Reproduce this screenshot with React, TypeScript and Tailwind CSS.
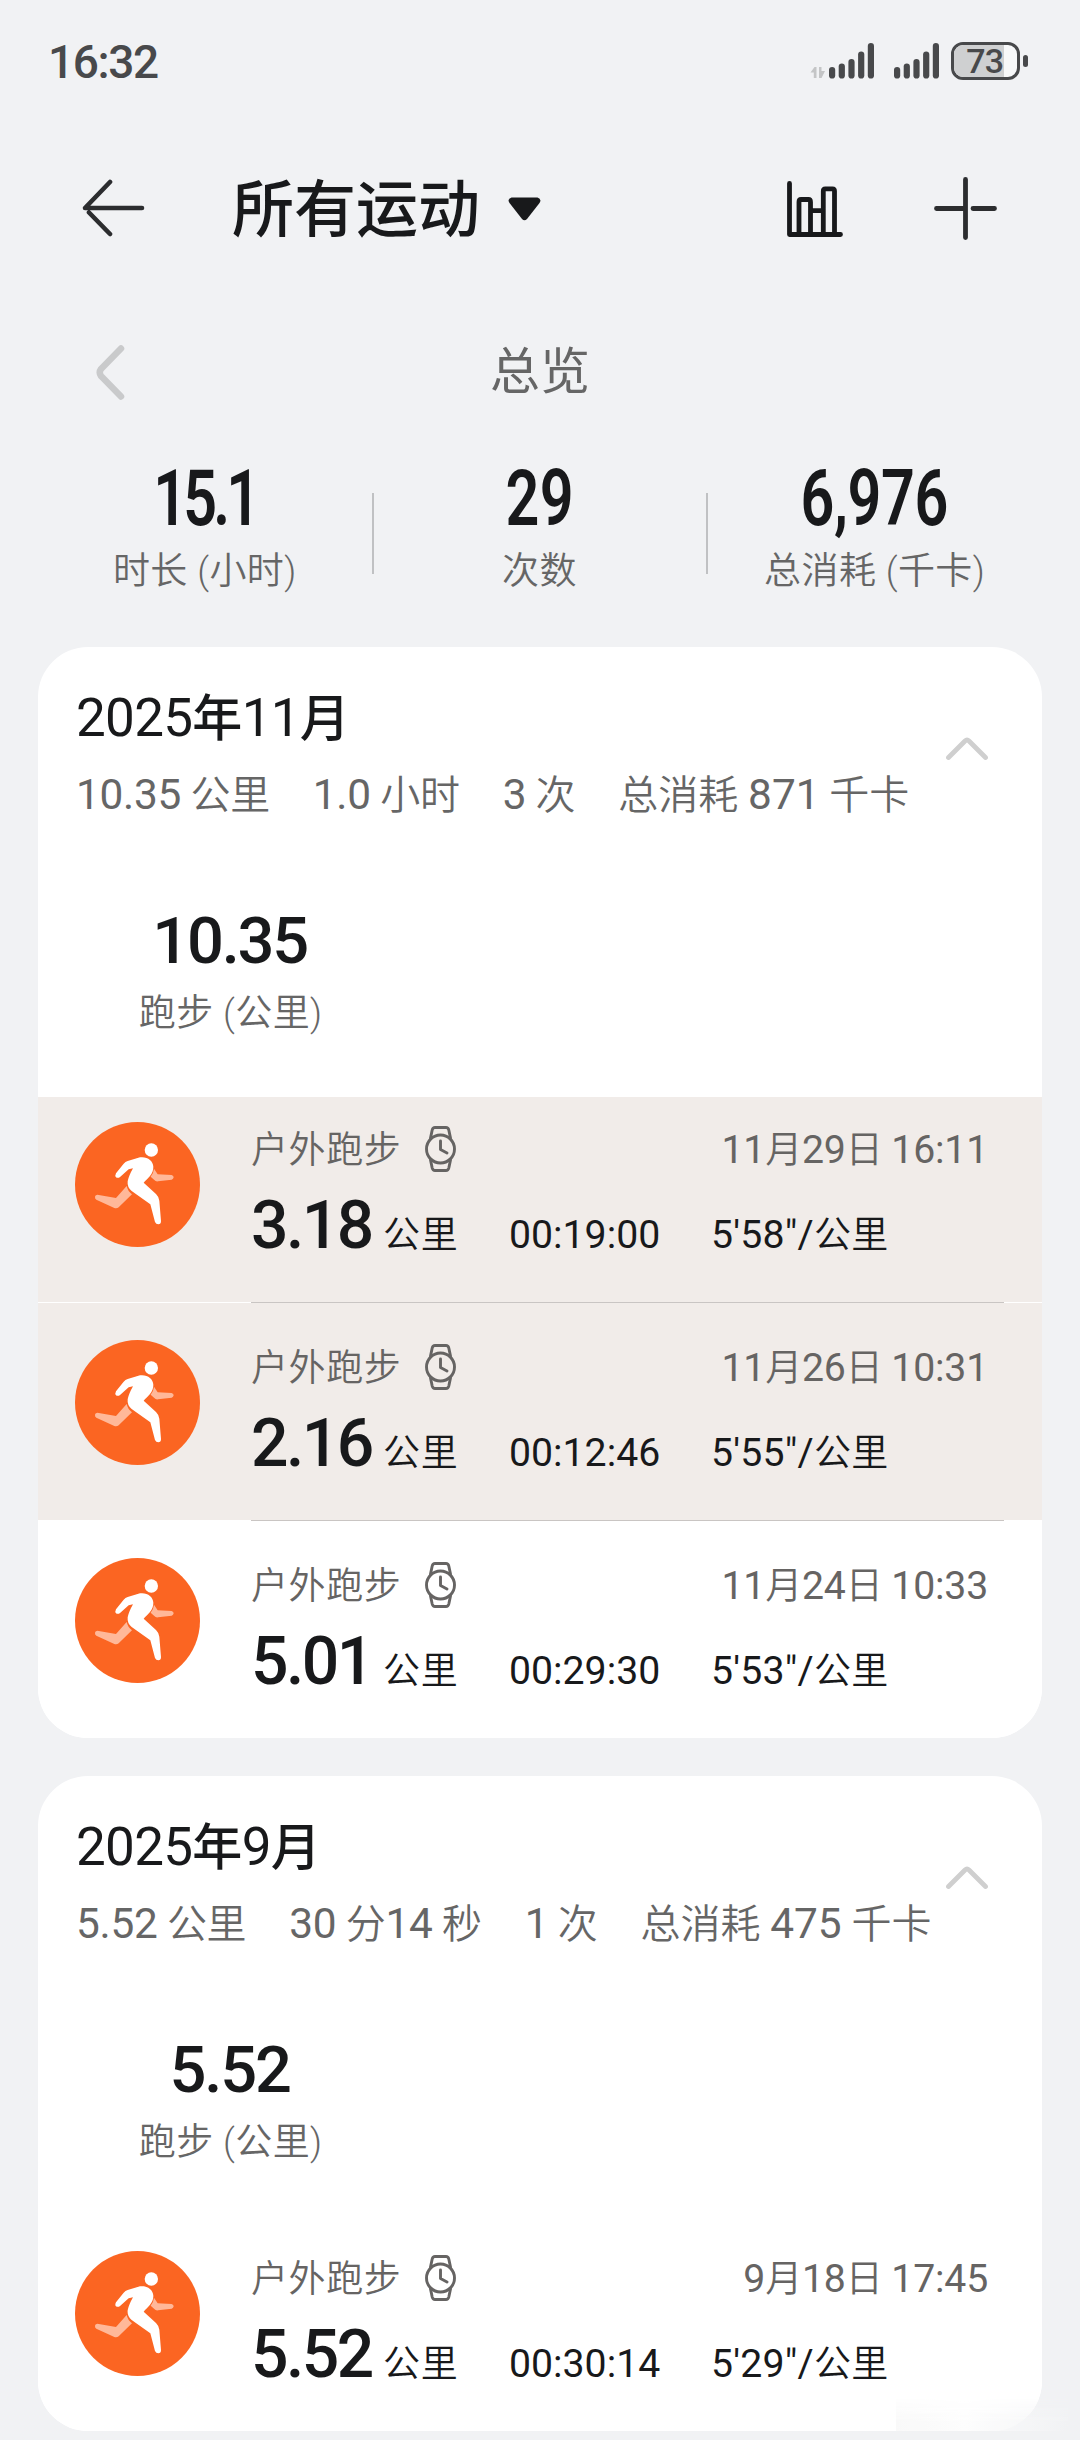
import { Fragment } from "react";

type Workout = {
  distance: string;
  duration: string;
  pace: string;
  date: string;
  highlighted?: boolean;
};

type Month = {
  title: string;
  summary: string[];
  total: string;
  workouts: Workout[];
};

const stats = [
  { value: "15.1", label: "时长 (小时)", tracking: "tracking-[-5px]" },
  { value: "29", label: "次数", tracking: "tracking-[0.5px]" },
  { value: "6,976", label: "总消耗 (千卡)", tracking: "tracking-[-0.5px]" },
];

const months: Month[] = [
  {
    title: "2025年11月",
    summary: ["10.35 公里", "1.0 小时", "3 次", "总消耗 871 千卡"],
    total: "10.35",
    workouts: [
      { distance: "3.18", duration: "00:19:00", pace: "5'58\"/公里", date: "11月29日 16:11", highlighted: true },
      { distance: "2.16", duration: "00:12:46", pace: "5'55\"/公里", date: "11月26日 10:31", highlighted: true },
      { distance: "5.01", duration: "00:29:30", pace: "5'53\"/公里", date: "11月24日 10:33" },
    ],
  },
  {
    title: "2025年9月",
    summary: ["5.52 公里", "30 分14 秒", "1 次", "总消耗 475 千卡"],
    total: "5.52",
    workouts: [
      { distance: "5.52", duration: "00:30:14", pace: "5'29\"/公里", date: "9月18日 17:45" },
    ],
  },
];

// Digits are set a little larger and heavier than the Chinese characters around them
function Mixed({ text }: { text: string }) {
  return (
    <>
      {text.split(/([\d.:'"/]+)/).map((part, i) =>
        i % 2 ? (
          <span key={i} className="text-[1.06em] font-normal">
            {part}
          </span>
        ) : (
          <Fragment key={i}>{part}</Fragment>
        )
      )}
    </>
  );
}

function Signal() {
  return (
    <svg width="45" height="36" viewBox="0 0 45 36" fill="#48494b">
      <rect x="0" y="24" width="6.2" height="11.5" rx="3.1" />
      <rect x="9.7" y="20.5" width="6.2" height="15" rx="3.1" />
      <rect x="19.4" y="16" width="6.2" height="19.5" rx="3.1" />
      <rect x="29.1" y="8.5" width="6.2" height="27" rx="3.1" />
      <rect x="38.8" y="0" width="6.2" height="35.5" rx="3.1" />
    </svg>
  );
}

function StatusBar() {
  return (
    <div className="flex h-[121px] items-center pl-[48px] pr-[52px] text-[#48494b]">
      <span className="pt-[3px] text-[46px] font-medium leading-none tracking-[-1.4px]">16:32</span>
      <div className="ml-auto flex items-center">
        <svg width="15" height="36" viewBox="0 0 15 36" fill="#c4c5c6" className="mr-[4px]">
          <path d="M6.500 35H3.800V29.500H0.500L4.500 24H6.500zM9 24H11.500V28H15L11.500 35H9z" />
        </svg>
        <Signal />
        <div className="w-[20px]" />
        <Signal />
        <div className="ml-[12px] h-[38px] w-[69px] overflow-hidden rounded-[12px] border-[3px] border-[#48494b] bg-[#f7f8f9]">
          <div className="flex h-full w-[50px] items-center justify-end bg-[#cfd0d1] pr-px pt-px text-[34px] font-medium leading-none tracking-[-1px]">
            73
          </div>
        </div>
        <div className="ml-[3px] h-[12px] w-[5px] rounded-full bg-[#48494b]" />
      </div>
    </div>
  );
}

function Header() {
  return (
    <header className="flex h-[174px] items-center pl-[82px] pr-[83px] text-[#18191b]">
      <svg width="63" height="58" viewBox="0 0 63 58" fill="none" stroke="#2c2d2f" strokeWidth="4.6" strokeLinecap="round">
        <path d="M60 29H3L28 3M7 33.500L28 55" strokeLinejoin="round" />
      </svg>
      <h1 className="ml-[87px] pt-[5px] text-[62px] font-[450] leading-none">所有运动</h1>
      <svg width="33" height="24" viewBox="0 0 33 24" className="ml-[28px] mt-[2px]" fill="#18191b">
        <path d="M3.500 0.500H29.500Q34 2 31.500 6L19 22Q16.500 24.500 14 22L1.500 6Q-1 2 3.500 0.500z" />
      </svg>
      <svg width="56" height="56" viewBox="0 0 56 56" className="ml-auto mt-[2px]" fill="none" stroke="#18191b" strokeWidth="4.800" strokeLinecap="round" strokeLinejoin="round">
        <path d="M2.500 2.500V53.500H53.500" />
        <path d="M12 53V21Q12 18.500 14 18.500H21.500Q23.500 18.500 23.500 21V53M36.300 53V10Q36.300 7.800 38.300 7.800H45.500Q47.500 7.800 47.500 10V53M24 29.700H36" />
      </svg>
      <svg width="63" height="63" viewBox="0 0 63 63" className="ml-[91px]" fill="none" stroke="#2c2d2f" strokeWidth="4.800" strokeLinecap="round">
        <path d="M31.500 2.500V60.500M2.500 31.500H31M39 31.500H60.500" />
      </svg>
    </header>
  );
}

function RunBadge() {
  return (
    <svg width="125" height="125" viewBox="45 36 375 375" className="shrink-0">
      <circle cx="232.500" cy="223.500" r="187.500" fill="#fb6522" />
      <path
        fill="#ffb899"
        d="M282 176L293 193L335 195Q341 198 341 202Q340 208 335 209L294 214Q287 215 283 210L272 200Q281 189 282 176zM200 228L168 264L112 254Q105 255 105 260Q104 266 109 269L163 294Q171 296 176 292L216 253Q203 243 200 228z"
      />
      <circle cx="274" cy="120" r="20" fill="#fff" />
      <path
        fill="#fff"
        d="M203 153L240 142C262 139 279 152 280 170C281 192 262 205 251 218L288 252Q297 261 298 272L303 333Q303 343 295 343Q288 343 285 336L271 283L215 243Q201 232 203 214Q206 198 219 175L206 178L181 200Q174 206 168 202Q164 198 168 190L191 161Q196 155 203 153z"
      />
    </svg>
  );
}

function WatchIcon() {
  return (
    <svg width="31" height="46" viewBox="0 0 31 46" fill="none" stroke="currentColor" strokeWidth="2.900" strokeLinejoin="round" strokeLinecap="round">
      <circle cx="15.500" cy="23" r="14" />
      <path d="M15.500 15V23.500L22 27M5.500 12L7.200 4Q7.800 1.500 10 1.500H21Q23.200 1.500 23.800 4L25.500 12M5.500 34L7.200 42Q7.800 44.500 10 44.500H21Q23.200 44.500 23.800 42L25.500 34" />
    </svg>
  );
}

function WorkoutRow({ workout, first }: { workout: Workout; first: boolean }) {
  return (
    <div
      className={`flex pl-[37px] pr-[54px] ${first ? "pt-[25px]" : "pt-[37px]"} ${
        workout.highlighted ? "bg-[#f1ece9]" : "bg-white"
      }`}
    >
      <RunBadge />
      <div className="ml-[51px] h-[180px] flex-1">
        <div className="flex h-[53px] items-center text-[37px] font-[350] leading-none text-[#666463]">
          <span className="mr-[24px] pt-[3px] tracking-[0.6px]">户外跑步</span>
          <WatchIcon />
          <span className="ml-auto pt-[4px] tracking-[-0.2px]">
            <Mixed text={workout.date} />
          </span>
        </div>
        <div className="mt-[18px] flex items-baseline text-[37px] font-[350] leading-[66px] text-[#18191b]">
          <span className="w-[132px] text-[66px] font-medium tracking-[-2.5px]">{workout.distance}</span>
          <span className="w-[126px] tracking-[0.8px]">公里</span>
          <span className="w-[202px]">
            <Mixed text={workout.duration} />
          </span>
          <span className="tracking-[0.2px]">
            <Mixed text={workout.pace} />
          </span>
        </div>
      </div>
    </div>
  );
}

function MonthCard({ month }: { month: Month }) {
  return (
    <section className="mx-[38px] mb-[38px] overflow-hidden rounded-[50px] bg-white">
      <div className="flex h-[202px] items-center pl-[38px] pr-[54px]">
        <div className="flex-1 pt-[18px]">
          <h2 className="text-[50px] font-[450] leading-[60px] tracking-[-0.7px] text-[#18191b]">
            <Mixed text={month.title} />
          </h2>
          <div className="mt-[16px] flex gap-[43px] whitespace-nowrap text-[40px] font-[350] leading-[60px] tracking-[-0.3px] text-[#666]">
            {month.summary.map((item) => (
              <span key={item} className="last:tracking-normal">
                <Mixed text={item} />
              </span>
            ))}
          </div>
        </div>
        <svg width="42" height="23" viewBox="0 0 42 23" fill="none" stroke="#cfcfcf" strokeWidth="4.800" strokeLinecap="round" strokeLinejoin="round">
          <path d="M2.500 20.500L19 4Q21 2 23 4L39.500 20.500" />
        </svg>
      </div>

      <div className="grid h-[248px] grid-cols-3 px-[38px] pt-[57px] text-center">
        <div>
          <div className="pr-[2px] text-[65px] font-medium leading-[70px] tracking-[-2.2px] text-[#18191b]">{month.total}</div>
          <div className="mt-[14px] text-[37px] font-[350] leading-[48px] tracking-[0.4px] text-[#666]">跑步 (公里)</div>
        </div>
      </div>

      {month.workouts.map((workout, i) => (
        <Fragment key={workout.date}>
          {i > 0 && <div className="ml-[213px] mr-[38px] h-px bg-[#c9c5c3]" />}
          <WorkoutRow workout={workout} first={i === 0} />
        </Fragment>
      ))}
    </section>
  );
}

export default function App() {
  return (
    <div className="relative h-[2440px] w-[1080px] overflow-hidden bg-[#f1f2f4] font-['Roboto','Noto_Sans_CJK_SC',sans-serif]">
      <StatusBar />
      <Header />

      <div className="flex h-[154px] items-center px-[96px]">
        <svg width="29" height="55" viewBox="0 0 29 55" fill="none" stroke="#c9cacb" strokeWidth="6.500" strokeLinecap="round" strokeLinejoin="round">
          <path d="M25 3.500L5 24Q2.500 27.500 5 31L25 51.500" />
        </svg>
        <div className="mr-[29px] flex-1 text-center text-[50px] leading-none text-[#666]">总览</div>
      </div>

      <div className="mx-[38px] grid h-[198px] grid-cols-3 pt-[22px]">
        {stats.map((stat, i) => (
          <div key={stat.label} className="flex">
            <div className="flex-1 text-center">
              <div className={`scale-x-[0.76] text-[78px] font-semibold leading-[56px] text-[#18191b] ${stat.tracking}`}>
                {stat.value}
              </div>
              <div className="mt-[21px] text-[37px] font-[350] leading-[48px] tracking-[0.4px] text-[#666]">{stat.label}</div>
            </div>
            {i < stats.length - 1 && <div className="-mr-px mt-[22px] h-[81px] w-[2px] bg-[#c0c1c3]" />}
          </div>
        ))}
      </div>

      {months.map((month) => (
        <MonthCard key={month.title} month={month} />
      ))}

      {/* faint smudge over the bottom right corner */}
      <div className="absolute bottom-[9px] right-[12px] h-[34px] w-[172px] bg-linear-to-r from-[#f8f8f8] via-[#fdfdfd] via-40% to-[#f2f3f5] opacity-80 mask-t-from-30%" />
    </div>
  );
}
